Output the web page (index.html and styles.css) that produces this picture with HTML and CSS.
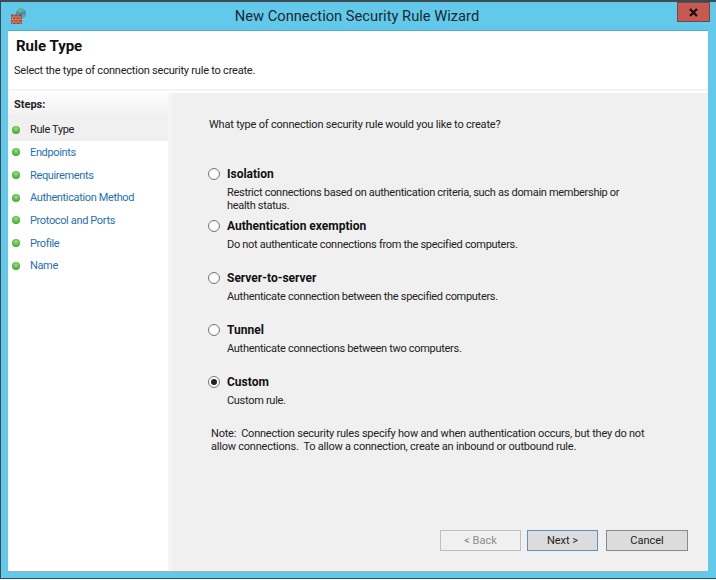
FILE: index.html
```html
<!DOCTYPE html>
<html lang="en">
<head>
<meta charset="utf-8">
<title>New Connection Security Rule Wizard</title>
<link rel="stylesheet" href="styles.css">
</head>
<body>
<div class="window">
  <div class="titlebar">
    <svg class="app-icon" width="16" height="16" viewBox="0 0 16 16">
      <circle cx="10" cy="5.500" r="5" fill="#3f8fd0"/>
      <path d="M6.500 3c2-2.500 5-2.500 6.500-.5-1 1.500-2 .5-3 1.500s-2 1-3.500-1z" fill="#6fbf4a"/>
      <path d="M11 7.500l3-1.500-1 3.500z" fill="#6fbf4a"/>
      <rect x="0" y="6.500" width="11" height="9.500" fill="#a5432f"/>
      <path d="M0 9h11M0 11.500h11M0 14h11M3 6.500V9M7 6.500V9M1.500 9v2.500M5 9v2.500M9 9v2.500M3 11.500V14M7 11.500V14M1.500 14v2M5 14v2M9 14v2" stroke="#d9a08f" stroke-width=".7" fill="none"/>
    </svg>
    <div class="title">New Connection Security Rule Wizard</div>
    <div class="close"><svg width="11" height="9" viewBox="0 0 11 9"><path d="M2 1l7 7M9 1L2 8" stroke="#111" stroke-width="2.200"/></svg></div>
  </div>
  <div class="client">
    <header class="header">
      <h1>Rule Type</h1>
      <p>Select the type of connection security rule to create.</p>
    </header>
    <div class="body">
      <nav class="steps">
        <div class="steps-head">Steps:</div>
        <ul class="step-list">
          <li class="step current"><i class="dot"></i>Rule Type</li>
          <li class="step"><i class="dot"></i>Endpoints</li>
          <li class="step"><i class="dot"></i>Requirements</li>
          <li class="step"><i class="dot"></i>Authentication Method</li>
          <li class="step"><i class="dot"></i>Protocol and Ports</li>
          <li class="step"><i class="dot"></i>Profile</li>
          <li class="step"><i class="dot"></i>Name</li>
        </ul>
      </nav>
      <main class="content">
        <p class="question">What type of connection security rule would you like to create?</p>
        <div class="options">
          <div class="option">
            <div class="opt-label"><i class="radio"></i>Isolation</div>
            <div class="opt-desc">Restrict connections based on authentication criteria, such as domain membership or<br>health status.</div>
          </div>
          <div class="option">
            <div class="opt-label"><i class="radio"></i>Authentication exemption</div>
            <div class="opt-desc">Do not authenticate connections from the specified computers.</div>
          </div>
          <div class="option">
            <div class="opt-label"><i class="radio"></i>Server-to-server</div>
            <div class="opt-desc">Authenticate connection between the specified computers.</div>
          </div>
          <div class="option">
            <div class="opt-label"><i class="radio"></i>Tunnel</div>
            <div class="opt-desc">Authenticate connections between two computers.</div>
          </div>
          <div class="option">
            <div class="opt-label"><i class="radio checked"></i>Custom</div>
            <div class="opt-desc">Custom rule.</div>
          </div>
        </div>
        <p class="note">Note:&nbsp; Connection security rules specify how and when authentication occurs, but they do not<br>allow connections.&nbsp; To allow a connection, create an inbound or outbound rule.</p>
        <div class="buttons">
          <button class="btn disabled" type="button">&lt; Back</button>
          <button class="btn default" type="button">Next &gt;</button>
          <button class="btn" type="button">Cancel</button>
        </div>
      </main>
    </div>
  </div>
</div>
</body>
</html>
```
FILE: styles.css
```css
* { box-sizing: border-box; }
html, body { margin: 0; padding: 0; }
body { width: 716px; height: 580px; overflow: hidden; background: #fff; font-family: Roboto, "Noto Sans", sans-serif; font-size: 11px; color: #222; white-space: nowrap; }
.window { width: 716px; height: 579px; background: #62c9ea; border: 1px solid #3c4a52; border-top-width: 2px; border-right: 0; display: flex; flex-direction: column; padding: 0 8px 7px 7px; }
.titlebar { height: 29px; flex: none; display: flex; align-items: center; position: relative; }
.app-icon { position: absolute; left: 3px; top: 6px; }
.title { flex: 1; text-align: center; font-size: 14.700px; color: #1a2a30; padding-bottom: 1px; padding-right: 2px; }
.close { position: absolute; top: 0; right: -2px; width: 33px; height: 20px; background: #c75a50; border: 1px solid #6b4a4c; display: flex; align-items: center; justify-content: center; }
.client { flex: 1; min-height: 0; display: flex; flex-direction: column; background: #fff; box-shadow: 0 -1px 0 #55a8c8, 0 1px 0 #a8aeb4; }
.header { height: 60px; flex: none; padding: 6px 6px 0 8px; border-bottom: 2px solid #f4f4f4; }
.header h1 { margin: 0; font-size: 15px; font-weight: 700; color: #111; line-height: 18px; }
.header p { margin: 8px 0 0 -2px; line-height: 16px; letter-spacing: -0.22px; }
.body { flex: 1; min-height: 0; display: flex; padding-top: 2px; background: #fff; }
.steps { width: 164px; flex: none; border-right: 4px solid #f5f5f5; }
.steps-head { height: 25px; padding: 3px 6px; font-weight: 700; line-height: 17px; background: linear-gradient(#fdfdfd, #efefef); color: #222; }
.step-list { list-style: none; margin: 0; padding: 0; }
.step { height: 22.700px; display: flex; align-items: center; padding-left: 4px; color: #1f6fb5; letter-spacing: -0.36px; }
.step.current { height: 23px; background: #f0f0f0; color: #222; }
.dot { width: 8px; height: 8px; border-radius: 50%; margin-right: 10px; flex: none; background: radial-gradient(circle at 50% 35%, #a0e080, #3fae2a 70%); }
.content { flex: 1; min-width: 0; background: #f0f0f0; display: flex; flex-direction: column; padding: 0 20px 20px 37px; }
.question { margin: 0; padding-top: 23px; line-height: 17px; letter-spacing: -0.2px; }
.options { margin-top: 32px; display: flex; flex-direction: column; }
.option { height: 52px; }
.opt-label { display: flex; align-items: center; font-size: 12px; font-weight: 700; line-height: 18px; color: #111; }
.opt-desc { padding-left: 18px; line-height: 13px; margin-top: 3px; letter-spacing: -0.3px; }
.radio { width: 12px; height: 12px; border-radius: 50%; border: 1px solid #767676; background: #fdfdfd; margin: 0 7px 0 -1px; flex: none; position: relative; }
.radio.checked::after { content: ""; position: absolute; left: 2px; top: 2px; width: 6px; height: 6px; border-radius: 50%; background: #222; }
.note { margin: 2px 0 0 2px; line-height: 13px; letter-spacing: -0.22px; }
.buttons { margin-top: auto; display: flex; justify-content: flex-end; }
.btn { width: 82px; height: 21px; padding: 0; font: inherit; background: #dcdcdc; border: 1px solid #8a8a8a; color: #222; margin-left: 8px; }
.btn.disabled { width: 81px; background: #f0f0f0; border-color: #bfbfbf; color: #8c8c8c; }
.btn.default { width: 71px; margin-left: 6px; border-color: #5a93c4; }
```
